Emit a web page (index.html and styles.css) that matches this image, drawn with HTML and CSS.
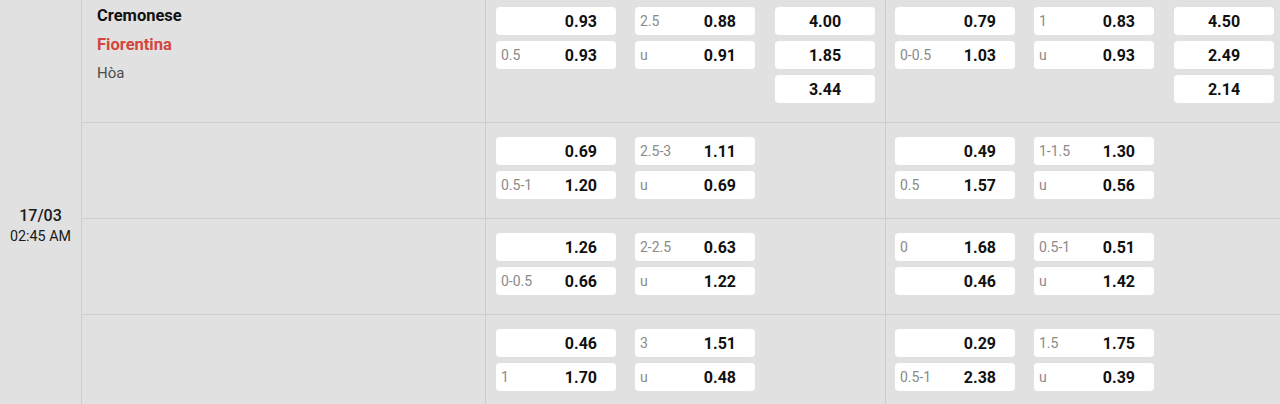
FILE: index.html
```html
<!DOCTYPE html>
<html>
<head>
<meta charset="utf-8">
<link rel="stylesheet" href="styles.css">
</head>
<body>
<div class="match">
  <div class="date">
    <div class="day">17/03</div>
    <div class="time">02:45 AM</div>
  </div>
  <div class="rows">
    <div class="row first">
      <div class="team">
        <div class="home">Cremonese</div>
        <div class="away">Fiorentina</div>
        <div class="draw">Hòa</div>
      </div>
      <div class="sec">
        <div class="col"><div class="odd"><span class="lbl"></span><span class="val">0.93</span></div><div class="odd"><span class="lbl">0.5</span><span class="val">0.93</span></div></div>
        <div class="col"><div class="odd"><span class="lbl">2.5</span><span class="val">0.88</span></div><div class="odd"><span class="lbl">u</span><span class="val">0.91</span></div></div>
        <div class="col x12"><div class="odd c"><span class="val">4.00</span></div><div class="odd c"><span class="val">1.85</span></div><div class="odd c"><span class="val">3.44</span></div></div>
      </div>
      <div class="sec last">
        <div class="col"><div class="odd"><span class="lbl"></span><span class="val">0.79</span></div><div class="odd"><span class="lbl">0-0.5</span><span class="val">1.03</span></div></div>
        <div class="col"><div class="odd"><span class="lbl">1</span><span class="val">0.83</span></div><div class="odd"><span class="lbl">u</span><span class="val">0.93</span></div></div>
        <div class="col x12"><div class="odd c"><span class="val">4.50</span></div><div class="odd c"><span class="val">2.49</span></div><div class="odd c"><span class="val">2.14</span></div></div>
      </div>
    </div>
    <div class="row">
      <div class="team"></div>
      <div class="sec">
        <div class="col"><div class="odd"><span class="lbl"></span><span class="val">0.69</span></div><div class="odd"><span class="lbl">0.5-1</span><span class="val">1.20</span></div></div>
        <div class="col"><div class="odd"><span class="lbl">2.5-3</span><span class="val">1.11</span></div><div class="odd"><span class="lbl">u</span><span class="val">0.69</span></div></div>
        <div class="col x12"></div>
      </div>
      <div class="sec last">
        <div class="col"><div class="odd"><span class="lbl"></span><span class="val">0.49</span></div><div class="odd"><span class="lbl">0.5</span><span class="val">1.57</span></div></div>
        <div class="col"><div class="odd"><span class="lbl">1-1.5</span><span class="val">1.30</span></div><div class="odd"><span class="lbl">u</span><span class="val">0.56</span></div></div>
        <div class="col x12"></div>
      </div>
    </div>
    <div class="row">
      <div class="team"></div>
      <div class="sec">
        <div class="col"><div class="odd"><span class="lbl"></span><span class="val">1.26</span></div><div class="odd"><span class="lbl">0-0.5</span><span class="val">0.66</span></div></div>
        <div class="col"><div class="odd"><span class="lbl">2-2.5</span><span class="val">0.63</span></div><div class="odd"><span class="lbl">u</span><span class="val">1.22</span></div></div>
        <div class="col x12"></div>
      </div>
      <div class="sec last">
        <div class="col"><div class="odd"><span class="lbl">0</span><span class="val">1.68</span></div><div class="odd"><span class="lbl"></span><span class="val">0.46</span></div></div>
        <div class="col"><div class="odd"><span class="lbl">0.5-1</span><span class="val">0.51</span></div><div class="odd"><span class="lbl">u</span><span class="val">1.42</span></div></div>
        <div class="col x12"></div>
      </div>
    </div>
    <div class="row">
      <div class="team"></div>
      <div class="sec">
        <div class="col"><div class="odd"><span class="lbl"></span><span class="val">0.46</span></div><div class="odd"><span class="lbl">1</span><span class="val">1.70</span></div></div>
        <div class="col"><div class="odd"><span class="lbl">3</span><span class="val">1.51</span></div><div class="odd"><span class="lbl">u</span><span class="val">0.48</span></div></div>
        <div class="col x12"></div>
      </div>
      <div class="sec last">
        <div class="col"><div class="odd"><span class="lbl"></span><span class="val">0.29</span></div><div class="odd"><span class="lbl">0.5-1</span><span class="val">2.38</span></div></div>
        <div class="col"><div class="odd"><span class="lbl">1.5</span><span class="val">1.75</span></div><div class="odd"><span class="lbl">u</span><span class="val">0.39</span></div></div>
        <div class="col x12"></div>
      </div>
    </div>
  </div>
</div>
</body>
</html>
```

FILE: styles.css
```css
html, body {
  margin: 0;
  padding: 0;
  background: #e1e1e1;
  font-family: Roboto, "Liberation Sans", Arial, sans-serif;
  color: #111;
}

.match {
  display: flex;
  width: 1280px;
}

.date {
  width: 82px;
  flex-shrink: 0;
  border-right: 1px solid #cdcdcd;
  display: flex;
  flex-direction: column;
  align-items: center;
  justify-content: center;
  padding-top: 40px;
  box-sizing: border-box;
}

.day {
  font-size: 16px;
  font-weight: 500;
  line-height: 20px;
  color: #1a1a1a;
}

.time {
  font-size: 14.3px;
  line-height: 20px;
  color: #1a1a1a;
}

.rows {
  flex: 1;
  min-width: 0;
  display: flex;
  flex-direction: column;
}

.row {
  display: flex;
  border-bottom: 1px solid #cdcdcd;
}

.team {
  width: 404px;
  flex-shrink: 0;
  border-right: 1px solid #cdcdcd;
  padding: 1px 0 0 15px;
  box-sizing: border-box;
}

.home, .away, .draw {
  line-height: 29px;
}

.home {
  font-size: 16.5px;
  font-weight: 700;
  color: #111;
}

.away {
  font-size: 16.5px;
  font-weight: 700;
  color: #d2463f;
}

.draw {
  font-size: 15px;
  color: #4d4d4d;
}

.sec {
  width: 400px;
  flex-shrink: 0;
  border-right: 1px solid #cdcdcd;
  box-sizing: border-box;
  display: flex;
  padding: 14px 10px 19px 10px;
}

.row.first .sec {
  padding-top: 7px;
}

.sec.last {
  flex: 1 1 auto;
  width: auto;
  border-right: none;
  padding-left: 9px;
}

.col {
  width: 120px;
  flex-shrink: 0;
  display: flex;
  flex-direction: column;
  gap: 6px;
}

.col + .col {
  margin-left: 19px;
}

.col.x12 {
  width: 100px;
  margin-left: 20px;
}

.odd {
  height: 28px;
  background: #fff;
  border-radius: 4px;
  display: flex;
  align-items: center;
  padding: 0 19px 0 5px;
}

.odd.c {
  justify-content: center;
  padding: 0;
}

.lbl {
  flex: 1;
  font-size: 14px;
  color: #8a8a8a;
}

.val {
  font-size: 16px;
  font-weight: 700;
  color: #111;
}
```
